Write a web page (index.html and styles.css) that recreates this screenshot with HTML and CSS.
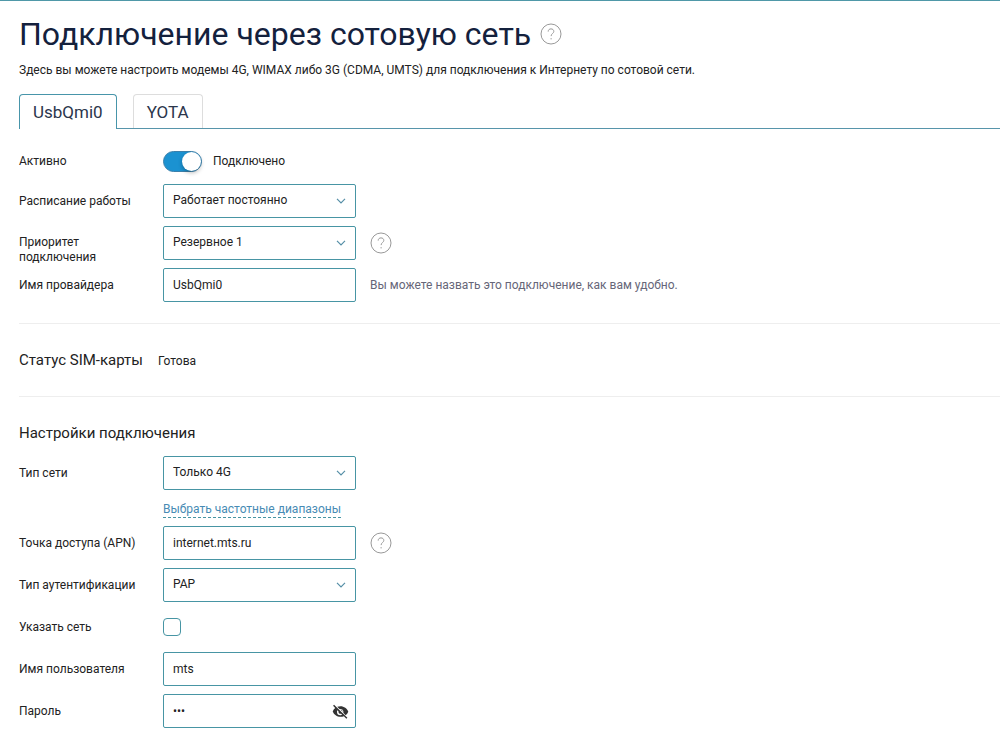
FILE: index.html
```html
<!DOCTYPE html>
<html lang="ru">
<head>
<meta charset="utf-8">
<title>Подключение через сотовую сеть</title>
<link rel="stylesheet" href="styles.css">
</head>
<body>
<svg class="sprite" aria-hidden="true">
  <symbol id="help" viewBox="0 0 22 22">
    <circle cx="11" cy="11" r="10" fill="none" stroke="currentColor"/>
    <path d="M8.2 8.6C8.2 6.9 9.3 5.9 11 5.9s2.8 1 2.8 2.5c0 2-2.7 2.3-2.7 4.7M11.1 15.1v1.3" fill="none" stroke="currentColor"/>
  </symbol>
  <symbol id="eye-off" viewBox="0 0 24 24">
    <path fill="currentColor" d="M12 4.5c-1.7 0-3.2.3-4.600.8l3.200 3.200c.4-.1.9-.2 1.400-.2 2.300 0 4.100 1.800 4.100 4.100 0 .5-.1 1-.2 1.400l3.400 3.400c1.600-1.300 2.900-3 3.700-4.900C21.300 7.700 17 4.500 12 4.500zM1.500 3.900l3 3C2.900 8.200 1.700 10 1 12c1.700 4.400 6 7.500 11 7.500 1.700 0 3.300-.3 4.800-.9l3.500 3.500 1.400-1.400L2.900 2.500 1.500 3.900zM7.700 10.100l1.500 1.500c-.1.300-.1.500-.1.800 0 1.600 1.300 2.900 2.900 2.900.3 0 .5 0 .8-.1l1.500 1.500c-.7.400-1.500.6-2.300.6a5 5 0 0 1-5-5c0-.8.200-1.500.7-2.200z"/>
    <path fill="currentColor" d="M12 9.200l3 3.100c0-1.700-1.300-3.100-3-3.100z"/>
  </symbol>
</svg>
<main class="page">
  <header class="page-header">
    <h1 class="title">Подключение через сотовую сеть</h1>
    <button class="help" type="button" aria-label="Справка"><svg><use href="#help"/></svg></button>
  </header>
  <p class="intro">Здесь вы можете настроить модемы 4G, WIMAX либо 3G (CDMA, UMTS) для подключения к Интернету по сотовой сети.</p>

  <nav class="tabs">
    <button class="tab tab-active" type="button">UsbQmi0</button>
    <button class="tab" type="button">YOTA</button>
  </nav>

  <section class="fields">
    <div class="row row-switch">
      <label class="label" for="active">Активно</label>
      <div class="control">
        <input class="switch" type="checkbox" role="switch" id="active" checked>
        <span>Подключено</span>
      </div>
    </div>
    <div class="row">
      <label class="label" for="schedule">Расписание работы</label>
      <div class="control"><select class="box select" id="schedule"><option>Работает постоянно</option></select></div>
    </div>
    <div class="row">
      <label class="label label-wrap" for="priority">Приоритет подключения</label>
      <div class="control">
        <select class="box select" id="priority"><option>Резервное 1</option></select>
        <button class="help" type="button" aria-label="Справка"><svg><use href="#help"/></svg></button>
      </div>
    </div>
    <div class="row">
      <label class="label" for="provider">Имя провайдера</label>
      <div class="control">
        <input class="box" type="text" id="provider" value="UsbQmi0">
        <span class="hint">Вы можете назвать это подключение, как вам удобно.</span>
      </div>
    </div>
  </section>

  <section class="sim">
    <h2 class="subtitle">Статус SIM-карты</h2>
    <span>Готова</span>
  </section>

  <section class="connection">
    <h2 class="subtitle">Настройки подключения</h2>
    <div class="fields">
      <div class="row">
        <label class="label" for="network">Тип сети</label>
        <div class="control"><select class="box select" id="network"><option>Только 4G</option></select></div>
      </div>
      <div class="row row-link">
        <a class="link" href="#">Выбрать частотные диапазоны</a>
      </div>
      <div class="row">
        <label class="label" for="apn">Точка доступа (APN)</label>
        <div class="control">
          <input class="box" type="text" id="apn" value="internet.mts.ru">
          <button class="help" type="button" aria-label="Справка"><svg><use href="#help"/></svg></button>
        </div>
      </div>
      <div class="row">
        <label class="label" for="auth">Тип аутентификации</label>
        <div class="control"><select class="box select" id="auth"><option>PAP</option></select></div>
      </div>
      <div class="row">
        <label class="label" for="manual">Указать сеть</label>
        <div class="control"><input class="check" type="checkbox" id="manual"></div>
      </div>
      <div class="row">
        <label class="label" for="user">Имя пользователя</label>
        <div class="control"><input class="box" type="text" id="user" value="mts"></div>
      </div>
      <div class="row">
        <label class="label" for="password">Пароль</label>
        <div class="control">
          <div class="password">
            <input class="box" type="password" id="password" value="mts">
            <button class="reveal" type="button" aria-label="Показать пароль"><svg><use href="#eye-off"/></svg></button>
          </div>
        </div>
      </div>
    </div>
  </section>
</main>
</body>
</html>
```
FILE: styles.css
```css
* {
  box-sizing: border-box;
}

body {
  margin: 0;
  background: #fff;
  color: #222;
  font: 12px/16px Roboto, "Liberation Sans", sans-serif;
}

button,
input,
select {
  margin: 0;
  padding: 0;
  font: inherit;
  color: inherit;
}

.sprite {
  display: none;
}

.page {
  padding-left: 19px;
  border-top: 1px solid #4f98a8;
}

.page-header {
  display: flex;
  align-items: center;
  gap: 9px;
  padding-top: 13px;
}

.title {
  margin: 0;
  color: #14213d;
  font-size: 32px;
  line-height: 40px;
  font-weight: 400;
}

.help {
  flex: none;
  width: 22px;
  height: 22px;
  border: 0;
  background: none;
  color: #999;
}

.help svg {
  display: block;
  width: 22px;
  height: 22px;
}

.intro {
  margin: 8px 0 0;
}

.tabs {
  display: flex;
  gap: 16px;
  margin-top: 16px;
  border-bottom: 1px solid #5795ab;
}

.tab {
  height: 34px;
  padding: 0 13px;
  border: 1px solid #ddd;
  border-bottom: 0;
  border-radius: 4px 4px 0 0;
  background: #fff;
  color: #2b364c;
  font-size: 17px;
}

.tab-active {
  margin-bottom: -1px;
  height: 35px;
  border-color: #4795aa;
}

.fields {
  display: grid;
  gap: 8px;
}

.tabs + .fields {
  padding: 17px 0 21px;
}

.row {
  display: grid;
  grid-template-columns: 144px 1fr;
  align-items: center;
  min-height: 34px;
}

.row-switch {
  min-height: 30px;
}

.row-link {
  min-height: 20px;
  align-items: end;
}

.label-wrap {
  align-self: start;
  width: 100px;
  padding-top: 9px;
  margin-bottom: -8px;
  line-height: 15px;
}

.control {
  display: flex;
  align-items: center;
  gap: 14px;
}

.box {
  width: 193px;
  height: 34px;
  padding: 0 9px;
  border: 1px solid #4795a4;
  border-radius: 2px;
  background: #fff;
}

.select {
  appearance: none;
  padding-bottom: 2px;
  background: #fff url("data:image/svg+xml,%3Csvg xmlns='http://www.w3.org/2000/svg' width='10' height='6'%3E%3Cpath d='M1 .8l4 4 4-4' fill='none' stroke='%23568fa7' stroke-width='1.2'/%3E%3C/svg%3E") no-repeat right 9px center;
}

.switch {
  appearance: none;
  width: 39px;
  height: 21px;
  border: 1px solid #3b80ab;
  border-radius: 11px;
  background: #1b92d1;
}

.switch::before {
  content: "";
  display: block;
  width: 19px;
  height: 19px;
  margin-left: auto;
  border-radius: 50%;
  background: #fff;
  box-shadow: 0 2px 4px #0004;
}

.row-switch .control {
  gap: 11px;
}

.hint {
  color: #666678;
}

.sim,
.connection {
  border-top: 1px solid #eee;
}

.sim {
  display: flex;
  align-items: baseline;
  gap: 15px;
  padding: 26px 0;
}

.subtitle {
  margin: 0;
  font-size: 15px;
  line-height: 20px;
  font-weight: 400;
}

.connection {
  padding: 26px 0 6px;
}

.connection .fields {
  margin-top: 13px;
}

.link {
  grid-column: 2;
  justify-self: start;
  border-bottom: 1px dashed #4795a4;
  color: #478bb4;
  text-decoration: none;
}

.check {
  appearance: none;
  width: 18px;
  height: 18px;
  border: 1px solid #4795a4;
  border-radius: 4px;
  background: #fff;
}

.password {
  display: grid;
  align-items: center;
}

.password .box,
.reveal {
  grid-area: 1 / 1;
}

.reveal {
  justify-self: end;
  margin-right: 7px;
  width: 17px;
  height: 17px;
  border: 0;
  background: none;
  color: #333;
}

.reveal svg {
  display: block;
  width: 17px;
  height: 17px;
}
```
